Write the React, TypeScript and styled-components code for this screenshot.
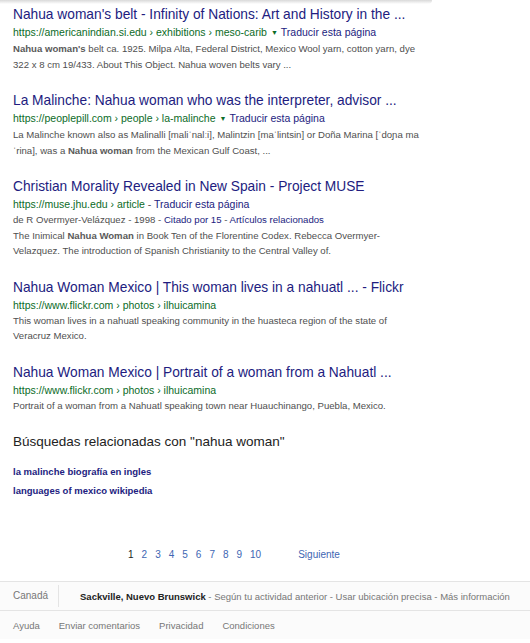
import styled, { createGlobalStyle } from "styled-components";

const GlobalStyle = createGlobalStyle`
    html, body {
        margin: 0;
        padding: 0;
        background: #ffffff;
        font-family: "Liberation Sans", Arial, sans-serif;
    }
`;

const Page = styled.div`
    width: 530px;
    min-height: 643px;
    overflow: hidden;
`;

const TopShade = styled.div`
    width: 432px;
    height: 4px;
    background: linear-gradient(#d9d9d9, rgba(255,255,255,0));
    border-radius: 0 0 4px 0;
`;

const Results = styled.div`
    padding: 2px 0 0 13px;
`;

const Result = styled.div`
    margin-bottom: 20px;
`;

const Title = styled.a`
    display: block;
    font-size: 13.75px;
    line-height: 18px;
    color: #221c80;
    white-space: nowrap;
    text-decoration: none;
`;

const Cite = styled.div`
    font-size: 10.5px;
    line-height: 16px;
    color: #0b6b27;
    white-space: nowrap;
`;

const Arrow = styled.span`
    display: inline-block;
    font-size: 7px;
    margin: 0 3px 0 4px;
    vertical-align: 1px;
`;

const BlueLink = styled.span`
    color: #221c80;
`;

const Dash = styled.span`
    color: #545454;
`;

const Snippet = styled.div`
    font-size: 9.6px;
    line-height: 15.5px;
    color: #4f4f4f;
    white-space: nowrap;
`;

const Em = styled.b`
    color: #5a5a5a;
`;

const RelatedTitle = styled.div`
    font-size: 13.5px;
    line-height: 18px;
    color: #222;
    margin-top: 1px;
`;

const RelatedList = styled.div`
    margin-top: 11px;
`;

const RelatedLink = styled.a`
    display: block;
    font-size: 9.5px;
    line-height: 19px;
    font-weight: bold;
    color: #221c80;
    text-decoration: none;
`;

const Pager = styled.div`
    display: flex;
    align-items: center;
    margin: 47px 0 18px 128px;
    font-size: 10px;
    line-height: 16px;
`;

const PageNum = styled.span<{ $current?: boolean }>`
    color: ${p => (p.$current ? "#222" : "#4066b3")};
    margin-right: 8px;
`;

const Next = styled.span`
    color: #4066b3;
    margin-left: 29px;
`;

const Footer = styled.div`
    background: #fbfbfb;
    border-top: 1px solid #e4e4e4;
    font-size: 9.5px;
    color: #777;
`;

const LocationRow = styled.div`
    display: flex;
    align-items: center;
    height: 28px;
    padding-left: 13px;
    border-bottom: 1px solid #e4e4e4;
    white-space: nowrap;
`;

const Country = styled.span`
    font-size: 10px;
    padding-right: 10px;
    border-right: 1px solid #e4e4e4;
    line-height: 22px;
`;

const Place = styled.span`
    padding-left: 21px;
    b {
        color: #222;
    }
`;

const LinksRow = styled.div`
    display: flex;
    align-items: center;
    gap: 19px;
    height: 28px;
    padding-left: 13px;
`;

interface IResult {
    title: string;
    site: string;
    path: string;
    translate?: "arrow" | "dash";
    meta?: boolean;
    lines: React.ReactNode[];
}

const results: IResult[] = [
    {
        title: "Nahua woman's belt - Infinity of Nations: Art and History in the ...",
        site: "https://americanindian.si.edu",
        path: " › exhibitions › meso-carib",
        translate: "arrow",
        lines: [
            <><Em>Nahua woman's</Em> belt ca. 1925. Milpa Alta, Federal District, Mexico Wool yarn, cotton yarn, dye</>,
            <>322 x 8 cm 19/433. About This Object. Nahua woven belts vary ...</>,
        ],
    },
    {
        title: "La Malinche: Nahua woman who was the interpreter, advisor ...",
        site: "https://peoplepill.com",
        path: " › people › la-malinche",
        translate: "arrow",
        lines: [
            <>La Malinche known also as Malinalli [maliˈnalːi], Malintzin [maˈlintsin] or Doña Marina [ˈdoɲa ma</>,
            <>ˈrina], was a <Em>Nahua woman</Em> from the Mexican Gulf Coast, ...</>,
        ],
    },
    {
        title: "Christian Morality Revealed in New Spain - Project MUSE",
        site: "https://muse.jhu.edu",
        path: " › article",
        translate: "dash",
        meta: true,
        lines: [
            <>The Inimical <Em>Nahua Woman</Em> in Book Ten of the Florentine Codex. Rebecca Overmyer-</>,
            <>Velazquez. The introduction of Spanish Christianity to the Central Valley of.</>,
        ],
    },
    {
        title: "Nahua Woman Mexico | This woman lives in a nahuatl ... - Flickr",
        site: "https://www.flickr.com",
        path: " › photos › ilhuicamina",
        lines: [
            <>This woman lives in a nahuatl speaking community in the huasteca region of the state of</>,
            <>Veracruz Mexico.</>,
        ],
    },
    {
        title: "Nahua Woman Mexico | Portrait of a woman from a Nahuatl ...",
        site: "https://www.flickr.com",
        path: " › photos › ilhuicamina",
        lines: [
            <>Portrait of a woman from a Nahuatl speaking town near Huauchinango, Puebla, Mexico.</>,
        ],
    },
];

function App() {
    return (
        <Page>
            <GlobalStyle />
            <TopShade />
            <Results>
                {results.map((r, i) => (
                    <Result key={i}>
                        <Title href="#">{r.title}</Title>
                        <Cite>
                            {r.site}{r.path}
                            {r.translate === "arrow" && <><Arrow>▼</Arrow><BlueLink>Traducir esta página</BlueLink></>}
                            {r.translate === "dash" && <><Dash> - </Dash><BlueLink>Traducir esta página</BlueLink></>}
                        </Cite>
                        {r.meta && (
                            <Snippet>
                                de R Overmyer-Velázquez - 1998 - <BlueLink>Citado por 15</BlueLink> - <BlueLink>Artículos relacionados</BlueLink>
                            </Snippet>
                        )}
                        {r.lines.map((line, j) => (
                            <Snippet key={j}>{line}</Snippet>
                        ))}
                    </Result>
                ))}
                <RelatedTitle>Búsquedas relacionadas con "nahua woman"</RelatedTitle>
                <RelatedList>
                    <RelatedLink href="#">la malinche biografía en ingles</RelatedLink>
                    <RelatedLink href="#">languages of mexico wikipedia</RelatedLink>
                </RelatedList>
            </Results>
            <Pager>
                {[1, 2, 3, 4, 5, 6, 7, 8, 9, 10].map(n => (
                    <PageNum key={n} $current={n === 1}>{n}</PageNum>
                ))}
                <Next>Siguiente</Next>
            </Pager>
            <Footer>
                <LocationRow>
                    <Country>Canadá</Country>
                    <Place>
                        <b>Sackville, Nuevo Brunswick</b> - Según tu actividad anterior - Usar ubicación precisa - Más información
                    </Place>
                </LocationRow>
                <LinksRow>
                    <span>Ayuda</span>
                    <span>Enviar comentarios</span>
                    <span>Privacidad</span>
                    <span>Condiciones</span>
                </LinksRow>
            </Footer>
        </Page>
    );
}

export default App;
